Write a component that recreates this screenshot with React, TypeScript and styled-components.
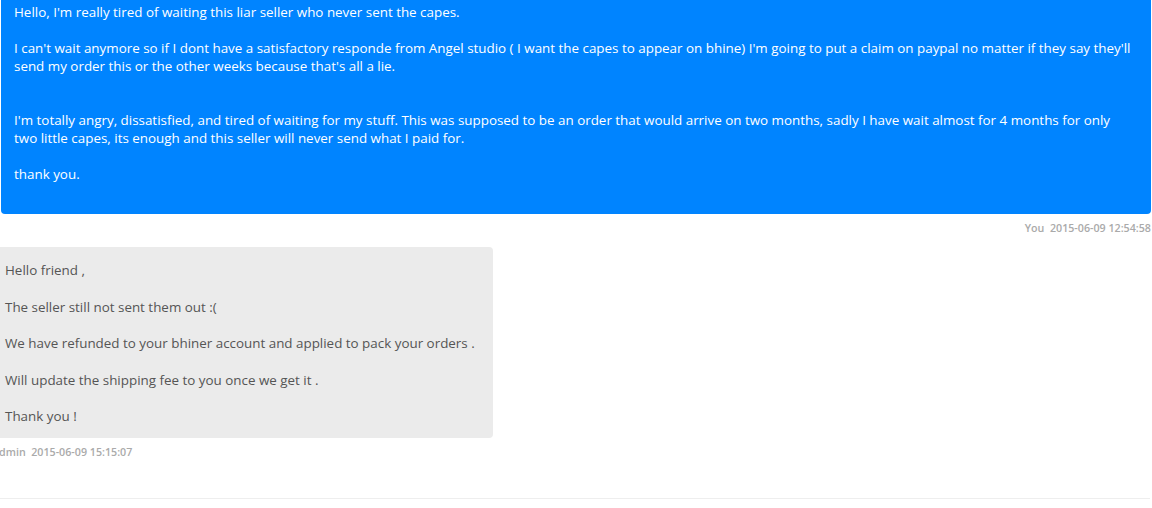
import React from 'react';
import styled, { createGlobalStyle } from 'styled-components';

const GlobalStyle = createGlobalStyle`
  html, body {
    margin: 0;
    padding: 0;
    background: #fff;
    overflow: hidden;
  }
  body {
    font-family: "Open Sans", "Noto Sans", Arial, sans-serif;
  }
`;

const Thread = styled.div`
  width: 1152px;
  margin-top: -10px;
  display: flex;
  flex-direction: column;
`;

const Message = styled.div<{ mine?: boolean }>`
  display: flex;
  flex-direction: column;
  align-items: ${p => (p.mine ? 'stretch' : 'flex-start')};
  margin: ${p => (p.mine ? '0 1px 11px 1px' : '0 0 0 -8px')};
`;

const Bubble = styled.div<{ mine?: boolean }>`
  background: ${p => (p.mine ? '#0084ff' : '#ebebeb')};
  color: ${p => (p.mine ? '#fff' : '#555')};
  font-size: 13.4px;
  line-height: ${p => (p.mine ? '18px' : '18.3px')};
  padding: ${p => (p.mine ? '13px 18px 31px 13px' : '14px 13px 12px 13px')};
  border-radius: 4px;
  white-space: pre-line;
  width: ${p => (p.mine ? 'auto' : '475px')};
`;

const Meta = styled.div<{ mine?: boolean }>`
  margin-top: 6px;
  font-size: 10.7px;
  line-height: 16px;
  font-weight: 600;
  color: #aaa;
  text-align: ${p => (p.mine ? 'right' : 'left')};
  white-space: pre;
`;

const Divider = styled.hr`
  margin: 38px 2px 0 0;
  border: 0;
  border-top: 1px solid #eee;
`;

const mineText =
  "Hello, I'm really tired of waiting this liar seller who never sent the capes.\n\n" +
  "I can't wait anymore so if I dont have a satisfactory responde from Angel studio ( I want the capes to appear on bhine) I'm going to put a claim on paypal no matter if they say they'll send my order this or the other weeks because that's all a lie.\n\n\n" +
  "I'm totally angry, dissatisfied, and tired of waiting for my stuff. This was supposed to be an order that would arrive on two months, sadly I have wait almost for 4 months for only two little capes, its enough and this seller will never send what I paid for.\n\n" +
  'thank you.';

const adminText =
  'Hello friend ,\n\n' +
  'The seller still not sent them out :(\n\n' +
  'We have refunded to your bhiner account and applied to pack your orders .\n\n' +
  'Will update the shipping fee to you once we get it .\n\n' +
  'Thank you !';

export default function App() {
  return (
    <>
      <GlobalStyle />
      <Thread>
        <Message mine>
          <Bubble mine>{mineText}</Bubble>
          <Meta mine>{'You  2015-06-09 12:54:58'}</Meta>
        </Message>
        <Message>
          <Bubble>{adminText}</Bubble>
          <Meta>{'Admin  2015-06-09 15:15:07'}</Meta>
        </Message>
        <Divider />
      </Thread>
    </>
  );
}
